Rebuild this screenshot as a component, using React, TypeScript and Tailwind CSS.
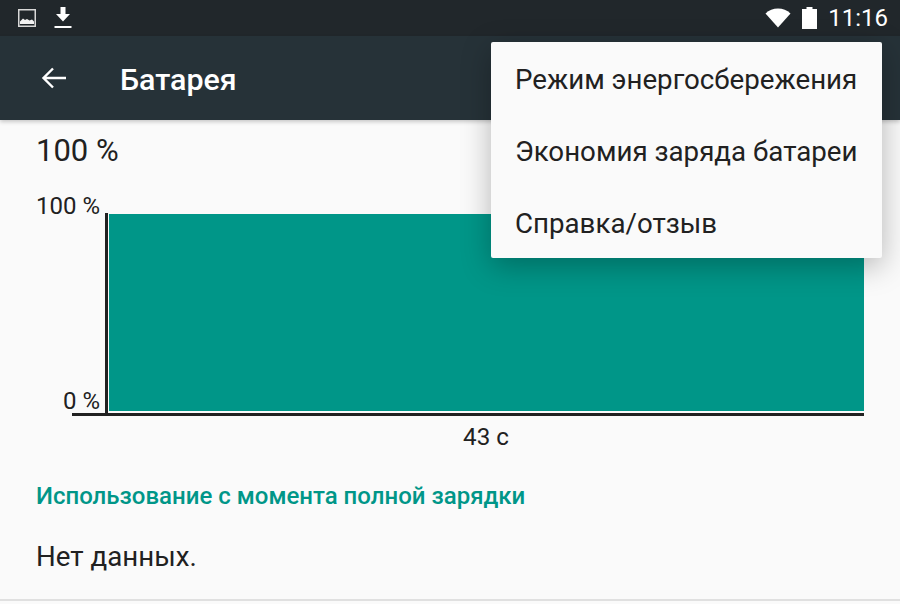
import React from "react";

const menuItems = ["Режим энергосбережения", "Экономия заряда батареи", "Справка/отзыв"];

const PictureIcon = () => (
  <svg width="18" height="18" viewBox="0 0 18 18">
    <rect x="0.75" y="0.75" width="16.5" height="16.5" fill="#21272b" stroke="#d8d8d8" strokeWidth="1.5" />
    <path d="M2 15V12.5L5 9.5L7 11L9 10L11.5 11.5L14 10.5L16 12.5V15Z" fill="#f2f2f2" />
  </svg>
);

const DownloadIcon = () => (
  <svg width="18" height="24" viewBox="0 0 18 24">
    <path d="M6.5 1H11.5V8H16L9 15.5L2 8H6.5Z" fill="#fff" />
    <rect x="0.5" y="20" width="17" height="2" fill="#fff" />
  </svg>
);

const WifiIcon = () => (
  <svg width="26" height="20" viewBox="0 0 26 20">
    <path d="M13 19.5L0.5 5.5C4 2.2 8.2 0.5 13 0.5C17.8 0.5 22 2.2 25.5 5.5Z" fill="#fff" />
  </svg>
);

const BatteryIcon = () => (
  <svg width="15" height="22" viewBox="0 0 15 22">
    <path d="M4.5 0H10.5V2H15V22H0V2H4.5Z" fill="#fff" />
  </svg>
);

const BackIcon = () => (
  <svg width="26" height="26" viewBox="0 0 26 26">
    <path d="M25 13H3M12 3.5L2.5 13L12 22.5" fill="none" stroke="#fff" strokeWidth="2.4" />
  </svg>
);

export default function App() {
  return (
    <div className="relative h-[604px] w-[900px] overflow-hidden bg-[#fafafa] font-['Roboto',sans-serif] text-[#212121]">
      <div className="flex h-9 items-center bg-[#21272b] pl-[18px] pr-3">
        <PictureIcon />
        <div className="ml-[18px]">
          <DownloadIcon />
        </div>
        <div className="ml-auto flex items-center">
          <WifiIcon />
          <div className="ml-[11px] mr-[11px]">
            <BatteryIcon />
          </div>
          <span className="text-[24px] leading-none text-white">11:16</span>
        </div>
      </div>

      <div className="flex h-[84px] items-center bg-[#263238] pl-[41px] shadow-[0_2px_4px_rgba(0,0,0,0.2)]">
        <BackIcon />
        <h1 className="ml-[53px] mt-[4px] text-[30.4px] font-medium text-white">Батарея</h1>
      </div>

      <div className="pl-9">
        <div className="pt-[13px] text-[31px] leading-9">100 %</div>

        <div className="mt-[44px] flex h-[204px] w-[828px] flex-col">
          <div className="flex h-[198px] items-stretch">
            <div className="flex w-[64px] flex-col justify-between text-right text-[24px] leading-none">
              <span className="mt-[-19px]">100 %</span>
              <span className="mb-[-2px]">0 %</span>
            </div>
            <div className="mb-[-2px] ml-[5px] w-[3px] bg-[#212121]" />
            <div className="ml-px mt-px w-[755px] bg-[#009688]" />
          </div>
          <div className="ml-9 mt-[2px] h-[3px] w-[792px] bg-[#212121]" />
        </div>

        <div className="ml-[72px] mt-[6px] w-[756px] text-center text-[24.2px] leading-7">43 с</div>

        <h2 className="mt-[31px] text-[24px] font-medium leading-7 text-[#009688]">
          Использование с момента полной зарядки
        </h2>

        <p className="mt-[31px] text-[27.7px] leading-8">Нет данных.</p>
      </div>

      <div className="absolute bottom-[3px] left-0 h-[2px] w-full bg-[#e0e0e0]" />

      <div className="absolute left-[491px] top-[42px] w-[391px] rounded-[2px] bg-[#fafafa] shadow-[0_8px_30px_rgba(0,0,0,0.28)]">
        {menuItems.map((item) => (
          <div key={item} className="flex h-[72px] items-center pl-[24px] pt-[3px] text-[27.7px]">
            {item}
          </div>
        ))}
      </div>
    </div>
  );
}
